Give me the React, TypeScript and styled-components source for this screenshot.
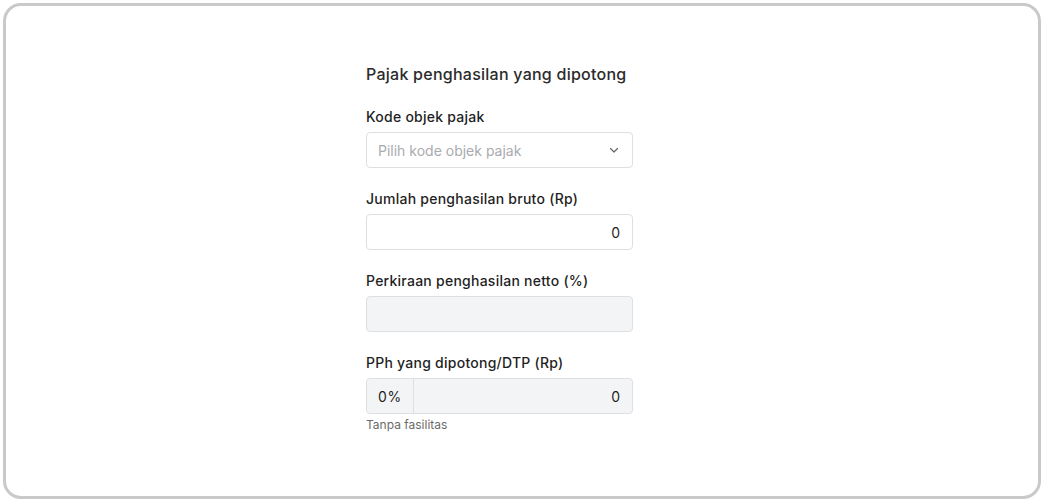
import React from "react";
import styled, { createGlobalStyle } from "styled-components";

const Global = createGlobalStyle`
  html, body { margin: 0; padding: 0; background: #ffffff; }
  body { font-family: Inter, "Liberation Sans", Arial, sans-serif; }
  * { box-sizing: border-box; }
`;

const Page = styled.div`
  width: 1043px;
  height: 500px;
  padding: 3px 2px 1px 3px;
`;

const Frame = styled.div`
  width: 100%;
  height: 100%;
  border: 3px solid #c9c9c9;
  border-radius: 18px;
  background: #fff;
  display: flex;
  justify-content: flex-start;
  padding: 58px 0 0 360px;
`;

const Form = styled.div`
  width: 267px;
  display: flex;
  flex-direction: column;
`;

const Title = styled.h2`
  margin: 0 0 23px 0;
  font-size: 16px;
  line-height: 20px;
  font-weight: 500;
  letter-spacing: 0.25px;
  color: #2b2b2b;
`;

const Field = styled.div`
  display: flex;
  flex-direction: column;
  margin-bottom: 21px;
`;

const Label = styled.label`
  font-size: 14px;
  line-height: 20px;
  font-weight: 500;
  letter-spacing: 0.25px;
  color: #1f1f1f;
  margin-bottom: 5px;
`;

const Box = styled.div<{ $disabled?: boolean; $align?: "left" | "right" }>`
  height: 36px;
  border: 1px solid #dddfe3;
  border-radius: 4px;
  background: ${(p) => (p.$disabled ? "#f3f4f6" : "#ffffff")};
  display: flex;
  align-items: center;
  justify-content: ${(p) => (p.$align === "right" ? "flex-end" : "space-between")};
  padding: 0 12px 0 11px;
  font-size: 14px;
  color: #1f1f1f;
`;

const Placeholder = styled.span`
  color: #a9abb0;
  font-size: 14px;
`;

const Group = styled.div`
  height: 36px;
  border: 1px solid #dddfe3;
  border-radius: 4px;
  background: #f3f4f6;
  display: flex;
  align-items: stretch;
  font-size: 14px;
  color: #1f1f1f;
`;

const Prefix = styled.div`
  width: 47px;
  border-right: 1px solid #dddfe3;
  display: flex;
  align-items: center;
  justify-content: center;
  letter-spacing: 0.8px;
`;

const GroupValue = styled.div`
  flex: 1;
  display: flex;
  align-items: center;
  justify-content: flex-end;
  padding-right: 12px;
`;

const Hint = styled.div`
  margin-top: 3px;
  font-size: 12px;
  line-height: 16px;
  color: #6b6b6b;
`;

const Chevron = () => (
  <svg width="12" height="12" viewBox="0 0 12 12" fill="none">
    <path d="M2.5 4.5 L6 8 L9.5 4.5" stroke="#666" strokeWidth="1.2" strokeLinecap="round" strokeLinejoin="round" />
  </svg>
);

export default function App() {
  return (
    <>
      <Global />
      <Page>
        <Frame>
          <Form>
            <Title>Pajak penghasilan yang dipotong</Title>
            <Field>
              <Label>Kode objek pajak</Label>
              <Box>
                <Placeholder>Pilih kode objek pajak</Placeholder>
                <Chevron />
              </Box>
            </Field>
            <Field>
              <Label>Jumlah penghasilan bruto (Rp)</Label>
              <Box $align="right">0</Box>
            </Field>
            <Field>
              <Label>Perkiraan penghasilan netto (%)</Label>
              <Box $disabled />
            </Field>
            <Field>
              <Label>PPh yang dipotong/DTP (Rp)</Label>
              <Group>
                <Prefix>0%</Prefix>
                <GroupValue>0</GroupValue>
              </Group>
              <Hint>Tanpa fasilitas</Hint>
            </Field>
          </Form>
        </Frame>
      </Page>
    </>
  );
}
